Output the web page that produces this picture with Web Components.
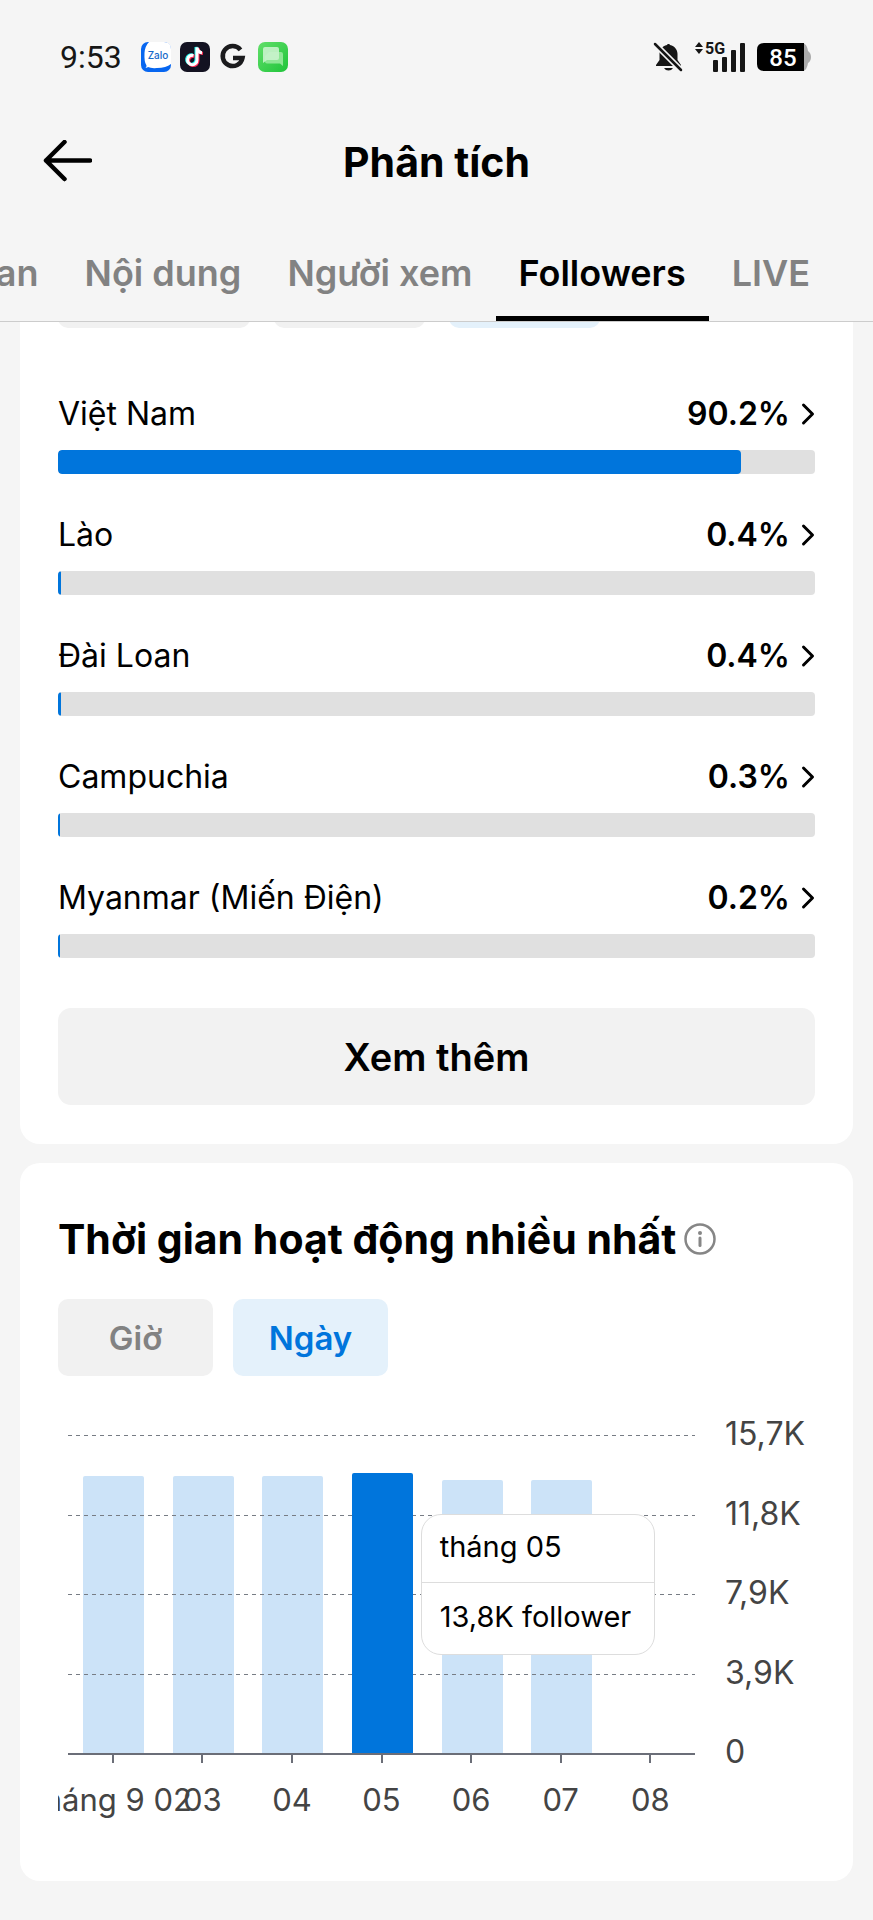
<!DOCTYPE html>
<html lang="vi">
<head>
<meta charset="utf-8">
<meta name="viewport" content="width=device-width, initial-scale=1">
<title>Phân tích</title>
<style>
    body {
        margin: 0;
        background: #f5f5f5;
        color: #000;
        font-family: Inter, "Liberation Sans", sans-serif;
        --blue: #0075dc;
        --blue-soft: #e4f1fb;
        --bar-soft: #cce3f8;
        --gray: #828282;
        --fill: #f2f2f2;
    }

    main {
        display: flex;
        flex-direction: column;
        gap: 19px;
        padding: 0 20px 38px;
        overflow: hidden;
    }

    /* the list is scrolled, only the lower edge of the filters shows */
    main > info-card:first-child {
        margin-top: -71px;
    }

    .filters {
        --chip-gap: 24px;
        --chip-width: 151px;
    }
</style>
</head>
<body>
<status-bar time="9:53" battery="85"></status-bar>
<page-header>Phân tích</page-header>
<tab-bar>
    <tab-item>Tổng quan</tab-item>
    <tab-item>Nội dung</tab-item>
    <tab-item>Người xem</tab-item>
    <tab-item active>Followers</tab-item>
    <tab-item>LIVE</tab-item>
</tab-bar>
<main>
    <info-card>
        <chip-group class="filters">
            <chip-button label="Giới tính" style="--chip-width: 192px"></chip-button>
            <chip-button label="Tuổi"></chip-button>
            <chip-button label="Địa điểm" active></chip-button>
        </chip-group>
        <country-list>
            <country-row value="90.2">Việt Nam</country-row>
            <country-row value="0.4">Lào</country-row>
            <country-row value="0.4">Đài Loan</country-row>
            <country-row value="0.3">Campuchia</country-row>
            <country-row value="0.2">Myanmar (Miến Điện)</country-row>
        </country-list>
        <more-button>Xem thêm</more-button>
    </info-card>
    <info-card class="activity">
        <card-title>Thời gian hoạt động nhiều nhất</card-title>
        <chip-group>
            <chip-button>Giờ</chip-button>
            <chip-button active>Ngày</chip-button>
        </chip-group>
        <bar-chart></bar-chart>
    </info-card>
</main>

<script>
const statusTemplate = `
<style>
    :host {
        display: flex;
        justify-content: space-between;
        align-items: center;
        height: 114px;
        padding: 0 62px 0 60px;
        color: #161616;
        font-family: Roboto, "Liberation Sans", sans-serif;
    }

    .left, .right {
        display: flex;
        align-items: center;
    }

    .left { gap: 9px; }
    .right { gap: 11px; }

    .time {
        font-size: 32px;
        line-height: 40px;
        margin-right: 10px;
    }

    svg { display: block; overflow: visible; }
</style>
<div class="left">
    <span class="time"></span>
    <svg width="30" height="30" viewBox="0 0 30 30">
        <rect width="30" height="30" rx="7" fill="#0766f0"/>
        <path d="M8 0H23Q30 0 30 7V22Q25 26 16 26Q10 26.500 7 25Q6 26 4.500 25.500Q6 24.500 5.500 23.500Q3 20 3.500 11Q4 4 8 0Z" fill="#fff"/>
        <text x="17" y="17" text-anchor="middle" font-family="Inter" font-size="10" font-weight="500" fill="#1769c9">Zalo</text>
    </svg>
    <svg width="30" height="30" viewBox="0 0 30 30">
        <rect width="30" height="30" rx="7" fill="#131221"/>
        <g fill="none" stroke-width="3">
            <path d="M13.500 13.500A4.700 4.700 0 1 0 17 18V5.500C17.500 9 19.500 10.500 22 10.700" stroke="#25f4ee" transform="translate(-1 -.6)"/>
            <path d="M13.500 13.500A4.700 4.700 0 1 0 17 18V5.500C17.500 9 19.500 10.500 22 10.700" stroke="#fe2c55" transform="translate(1 .8)"/>
            <path d="M13.500 13.500A4.700 4.700 0 1 0 17 18V5.500C17.500 9 19.500 10.500 22 10.700" stroke="#fff"/>
        </g>
    </svg>
    <svg width="30" height="30" viewBox="0 0 30 30">
        <path d="M21.500 7.800A10 10 0 1 0 23.500 16H14" fill="none" stroke="#1b1b1d" stroke-width="4.500"/>
    </svg>
    <svg width="30" height="30" viewBox="0 0 30 30">
        <defs>
            <linearGradient id="green" x1="0" y1="0" x2="1" y2="1">
                <stop offset="0" stop-color="#62df6a"/>
                <stop offset="1" stop-color="#1fc43a"/>
            </linearGradient>
        </defs>
        <rect width="30" height="30" rx="7" fill="url(#green)"/>
        <path d="M11 10H23Q25 10 25 12V24L22 21.500H9Q7 21.500 7 19.500V14Z" fill="#8ee795"/>
        <path d="M7 5H19Q21 5 21 7V16Q21 18 19 18H9L5 21V7Q5 5 7 5Z" fill="#c9f3cc" opacity=".9"/>
    </svg>
</div>
<div class="right">
    <svg width="30" height="30" viewBox="0 0 30 30" fill="#161616">
        <path d="M14 3C14 1.500 17 1.500 17 3C22 4 24.500 8 24.500 12V18L28 23V24H3V23L6.500 18V12C6.500 8 9 4 14 3Z"/>
        <path d="M11 26H20Q18.500 28.500 15.500 28.500Q12.500 28.500 11 26Z"/>
        <path d="M1 1L29 29" stroke="#f5f5f5" stroke-width="6"/>
        <path d="M2 2L28 28" stroke="#161616" stroke-width="2.500" stroke-linecap="round"/>
    </svg>
    <svg width="52" height="30" viewBox="0 0 52 30" fill="#161616">
        <path d="M5 0L9 5H1ZM5 12L1 7H9Z"/>
        <text x="11" y="12" font-size="16" font-weight="700">5G</text>
        <rect x="19" y="18" width="5" height="12" rx="1"/>
        <rect x="28" y="15" width="5" height="15" rx="1"/>
        <rect x="37" y="8" width="5" height="22" rx="1"/>
        <rect x="46" y="1" width="5" height="29" rx="1"/>
    </svg>
    <svg width="54" height="30" viewBox="0 0 54 30">
        <path d="M46 1Q50 2 51 9Q54 11 54 15Q54 19 51 21Q50 28 46 29Z" fill="#ababab"/>
        <path d="M7 1H47V29H7Q0 29 0 22V8Q0 1 7 1Z"/>
        <text class="level" x="26" y="24" text-anchor="middle" font-size="24" font-weight="500" fill="#fff"></text>
    </svg>
</div>
`;

class StatusBar extends HTMLElement {
    constructor() {
        super();
        this.attachShadow({ mode: 'open' });
        this.shadowRoot.innerHTML = statusTemplate;
    }

    connectedCallback() {
        this.shadowRoot.querySelector('.time').textContent = this.getAttribute('time');
        this.shadowRoot.querySelector('.level').textContent = this.getAttribute('battery');
    }
}

customElements.define('status-bar', StatusBar);

const headerTemplate = `
<style>
    :host {
        display: grid;
        grid-template-columns: 50px 1fr 50px;
        align-items: center;
        height: 95px;
        padding: 0 42px;
    }

    button {
        border: 0;
        padding: 0;
        background: none;
        cursor: pointer;
    }

    svg { display: block; }

    h1 {
        margin: 0;
        text-align: center;
        font-size: 41px;
        line-height: 48px;
        font-weight: 700;
    }
</style>
<button aria-label="Quay lại">
    <svg width="50" height="44" viewBox="0 0 50 44" fill="none" stroke="#000" stroke-width="4.500" stroke-linecap="round" stroke-linejoin="round">
        <path d="M22.500 2L4 20.500L22.500 39M4 20.500H48"/>
    </svg>
</button>
<h1><slot></slot></h1>
`;

class PageHeader extends HTMLElement {
    constructor() {
        super();
        this.attachShadow({ mode: 'open' });
        this.shadowRoot.innerHTML = headerTemplate;
    }
}

customElements.define('page-header', PageHeader);

class TabBar extends HTMLElement {
    constructor() {
        super();
        this.attachShadow({ mode: 'open' });
        this.shadowRoot.innerHTML = `
<style>
    :host {
        display: flex;
        justify-content: flex-end;
        overflow: hidden;
        padding-right: 40px;
        border-bottom: 1px solid #ccc;
    }
</style>
<slot></slot>
`;
    }
}

customElements.define('tab-bar', TabBar);

class TabItem extends HTMLElement {
    constructor() {
        super();
        this.attachShadow({ mode: 'open' });
        this.shadowRoot.innerHTML = `
<style>
    :host { display: block; flex: none; }

    button {
        border: 0;
        border-bottom: 5px solid transparent;
        padding: 42px 23px 21px;
        background: none;
        color: var(--gray);
        font: 600 36px/44px Inter, "Liberation Sans", sans-serif;
        white-space: nowrap;
        cursor: pointer;
        display: block;
    }

    :host([active]) button {
        color: #000;
        border-color: #000;
    }
</style>
<button><slot></slot></button>
`;
    }
}

customElements.define('tab-item', TabItem);

class InfoCard extends HTMLElement {
    constructor() {
        super();
        this.attachShadow({ mode: 'open' });
        this.shadowRoot.innerHTML = `
<style>
    :host {
        display: block;
        padding: 0 38px 39px;
        background: #fff;
        border-radius: 20px;
    }

    :host(.activity) {
        padding: 52px 38px 61px;
    }
</style>
<slot></slot>
`;
    }
}

customElements.define('info-card', InfoCard);

class ChipGroup extends HTMLElement {
    constructor() {
        super();
        this.attachShadow({ mode: 'open' });
        this.shadowRoot.innerHTML = `
<style>
    :host { display: flex; gap: var(--chip-gap, 20px); }
</style>
<slot></slot>
`;
    }
}

customElements.define('chip-group', ChipGroup);

class ChipButton extends HTMLElement {
    constructor() {
        super();
        this.attachShadow({ mode: 'open' });
        this.shadowRoot.innerHTML = `
<style>
    :host {
        display: block;
        width: var(--chip-width, 155px);
    }

    button {
        display: block;
        width: 100%;
        height: 77px;
        border: 0;
        border-radius: 10px;
        padding: 0;
        background: #f1f1f1;
        color: var(--gray);
        font: 600 33px/44px Inter, "Liberation Sans", sans-serif;
        cursor: pointer;
    }

    :host([active]) button {
        background: var(--blue-soft);
        color: var(--blue);
    }
</style>
<button><slot></slot></button>
`;
    }

    connectedCallback() {
        if(this.hasAttribute('label')) {
            this.shadowRoot.querySelector('button').setAttribute('aria-label', this.getAttribute('label'));
        }
    }
}

customElements.define('chip-button', ChipButton);

class CountryList extends HTMLElement {
    constructor() {
        super();
        this.attachShadow({ mode: 'open' });
        this.shadowRoot.innerHTML = `
<style>
    :host {
        display: flex;
        flex-direction: column;
        gap: 38px;
        padding: 63px 0 50px;
    }
</style>
<slot></slot>
`;
    }
}

customElements.define('country-list', CountryList);

const countryTemplate = `
<style>
    :host { display: block; }

    a {
        display: flex;
        align-items: center;
        gap: 10px;
        padding: 1px 0 14px;
        color: #000;
        font-size: 32px;
        line-height: 44px;
        text-decoration: none;
    }

    .name { flex: 1; }
    .value { font-weight: 600; }

    .track {
        height: 24px;
        border-radius: 4px;
        background: #e0e0e0;
        overflow: hidden;
    }

    .fill {
        height: 100%;
        background: var(--blue);
        border-radius: 4px;
    }
</style>
<a href="#">
    <span class="name"><slot></slot></span>
    <span class="value"></span>
    <svg width="15" height="24" viewBox="0 0 15 24" fill="none" stroke="#000" stroke-width="3" stroke-linecap="round" stroke-linejoin="round">
        <path d="M3.500 3L12.500 12L3.500 21"/>
    </svg>
</a>
<div class="track"><div class="fill"></div></div>
`;

class CountryRow extends HTMLElement {
    constructor() {
        super();
        this.attachShadow({ mode: 'open' });
        this.shadowRoot.innerHTML = countryTemplate;
    }

    connectedCallback() {
        const value = this.getAttribute('value') + '%';
        this.shadowRoot.querySelector('.value').textContent = value;
        this.shadowRoot.querySelector('.fill').style.width = value;
    }
}

customElements.define('country-row', CountryRow);

class MoreButton extends HTMLElement {
    constructor() {
        super();
        this.attachShadow({ mode: 'open' });
        this.shadowRoot.innerHTML = `
<style>
    :host { display: block; }

    button {
        display: block;
        width: 100%;
        height: 97px;
        border: 0;
        border-radius: 13px;
        background: var(--fill);
        color: #000;
        font: 600 38px/48px Inter, "Liberation Sans", sans-serif;
        cursor: pointer;
    }
</style>
<button><slot></slot></button>
`;
    }
}

customElements.define('more-button', MoreButton);

class CardTitle extends HTMLElement {
    constructor() {
        super();
        this.attachShadow({ mode: 'open' });
        this.shadowRoot.innerHTML = `
<style>
    :host {
        display: flex;
        align-items: center;
        gap: 8px;
        margin-bottom: 36px;
    }

    h2 {
        margin: 0;
        font-size: 41px;
        line-height: 48px;
        font-weight: 700;
        white-space: nowrap;
    }

    button {
        border: 0;
        padding: 0;
        background: none;
        cursor: pointer;
    }

    svg { display: block; }
</style>
<h2><slot></slot></h2>
<button aria-label="Thông tin">
    <svg width="32" height="32" viewBox="0 0 32 32" fill="none" stroke="#868686">
        <circle cx="16" cy="16" r="14.500" stroke-width="2.500"/>
        <circle cx="16" cy="10" r="2" fill="#868686" stroke="none"/>
        <path d="M16 15V22.500" stroke-width="3" stroke-linecap="round"/>
    </svg>
</button>
`;
    }
}

customElements.define('card-title', CardTitle);

const chartTemplate = `
<style>
    :host {
        display: grid;
        grid-template-columns: 1fr 90px;
        column-gap: 30px;
        margin-top: 38px;
        padding-left: 10px;
        color: #444;
        font-size: 32px;
        line-height: 40px;
    }

    .clip {
        margin-left: -10px;
        padding-left: 10px;
        overflow: hidden;
    }

    .plot {
        position: relative;
        height: 318px;
        margin-top: 21px;
        border-bottom: 2px solid #6b6e78;
    }

    .columns {
        display: flex;
        align-items: flex-end;
        height: 100%;
    }

    .column {
        flex: 1;
        display: flex;
        align-items: flex-end;
        justify-content: center;
        height: 100%;
        padding-left: 2px;
    }

    .bar {
        width: 61px;
        border-radius: 2px 2px 0 0;
        background: var(--bar-soft);
    }

    .bar.active {
        background: var(--blue);
        position: relative;
        z-index: 2;
    }

    /* grid lines run over the pale bars and under the selected one */
    .lines {
        position: absolute;
        inset: 0;
        z-index: 1;
        display: flex;
        flex-direction: column;
    }

    .lines i {
        flex: 1;
        background: repeating-linear-gradient(90deg, #777c84 0 4px, transparent 4px 8px) top / 100% 1px no-repeat;
    }

    .dates {
        display: flex;
        font-size: 31px;
    }

    .dates span {
        flex: 1 1 0;
        width: 0;
        display: flex;
        flex-direction: column;
        align-items: center;
        white-space: nowrap;
    }

    .dates span::before {
        content: "";
        width: 2px;
        height: 8px;
        margin-bottom: 17px;
        background: #6b6e78;
    }

    .scale {
        display: flex;
        flex-direction: column;
        justify-content: space-between;
        height: 358px;
    }

    .tooltip {
        position: absolute;
        left: 58%;
        top: 79px;
        z-index: 3;
        box-sizing: border-box;
        width: 234px;
        margin-left: -11px;
        border: 1px solid #ddd;
        border-radius: 20px;
        background: #fff;
        color: #000;
        font-size: 29px;
    }

    .tooltip div {
        padding: 12px 18px 15px;
        white-space: nowrap;
    }

    .tooltip div + div {
        border-top: 1px solid #ddd;
        padding: 14px 18px 17px;
    }
</style>
<div class="clip">
    <div class="plot">
        <div class="columns"></div>
        <div class="lines"><i></i><i></i><i></i><i></i></div>
        <div class="tooltip"><div>tháng 05</div><div>13,8K follower</div></div>
    </div>
    <div class="dates"></div>
</div>
<div class="scale"><span>15,7K</span><span>11,8K</span><span>7,9K</span><span>3,9K</span><span>0</span></div>
`;

class BarChart extends HTMLElement {
    constructor() {
        super();
        this.attachShadow({ mode: 'open' });
        this.shadowRoot.innerHTML = chartTemplate;
        this._days = [
            ['tháng 9 02', 87],
            ['03', 87],
            ['04', 87],
            ['05', 88],
            ['06', 86],
            ['07', 86],
            ['08', 0]
        ];
    }

    connectedCallback() {
        this._render();
    }

    _render() {
        const columns = this.shadowRoot.querySelector('.columns');
        const dates = this.shadowRoot.querySelector('.dates');
        columns.innerHTML = this._days.map(([day, height]) => `
            <div class="column"><div class="bar ${day === '05' ? 'active' : ''}" style="height: ${height}%"></div></div>
        `).join('');
        dates.innerHTML = this._days.map(([day]) => `<span>${day}</span>`).join('');
    }
}

customElements.define('bar-chart', BarChart);
</script>
</body>
</html>
